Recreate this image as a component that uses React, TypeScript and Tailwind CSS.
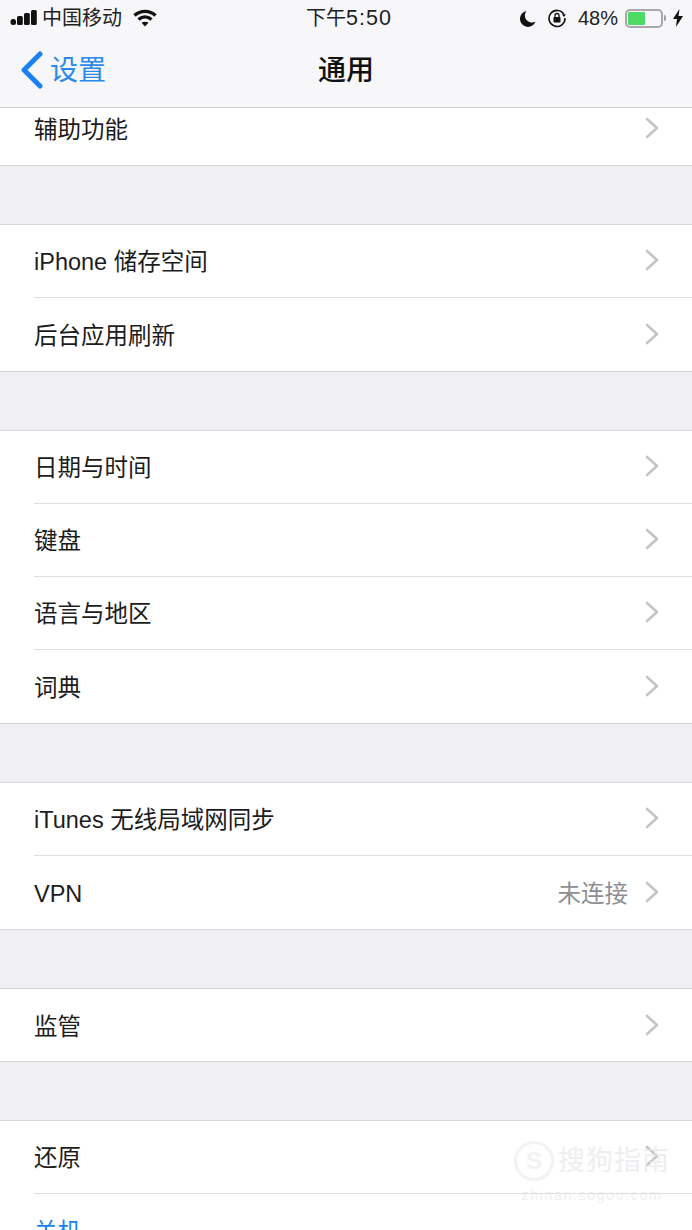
import React from 'react';

const font = { fontFamily: '"Liberation Sans", "Noto Sans CJK SC", sans-serif' };

const Chevron = () => (
  <svg width="14" height="22" viewBox="0 0 14 22" fill="none" className="shrink-0 -translate-y-[1px]">
    <path d="M2 2l10 9-10 9" stroke="#c4c4c8" strokeWidth="2.6" strokeLinecap="round" strokeLinejoin="round" />
  </svg>
);

const Row = ({ label, value, last, blue }: { label: string; value?: string; last?: boolean; blue?: boolean }) => (
  <div className="pl-[34px]">
    <div className={`flex h-[73px] items-center pr-[33px] ${last ? '' : 'border-b border-[#dddde0]'}`}>
      <span className={`flex-1 pt-[4px] text-[23.5px] leading-none ${blue ? 'text-[#1a82f0]' : 'text-[#1c1c1e]'}`}>{label}</span>
      {value && <span className="mr-[17px] pt-[4px] text-[23.5px] leading-none text-[#8e8e93]">{value}</span>}
      {!blue && <Chevron />}
    </div>
  </div>
);

const Section = ({ items, short }: { items: { label: string; value?: string }[]; short?: boolean }) => (
  <div className={`mt-[58px] border-y border-[#d9d9dd] bg-white ${short ? 'h-[74px]' : ''}`}>
    {items.map((it, i) => (
      <Row key={it.label} label={it.label} value={it.value} last={i === items.length - 1} />
    ))}
  </div>
);

const StatusBar = () => (
  <div className="flex h-[36px] items-center justify-between pl-[10px] pr-[8px] text-black">
    <div className="flex w-[200px] items-center">
      <svg width="27" height="18" viewBox="0 0 27 18" fill="#111">
        <rect x="0.500" y="10" width="5.500" height="6" rx="2.500" />
        <rect x="7" y="7" width="5.800" height="9" rx="1.500" />
        <rect x="14" y="4" width="5.800" height="12" rx="1.500" />
        <rect x="21" y="1" width="5.800" height="15" rx="1.500" />
      </svg>
      <span className="ml-[5px] text-[20px] leading-none text-[#222]">中国移动</span>
      <svg width="24" height="18" viewBox="0 0 24 18" fill="none" className="ml-[11px]">
        <path d="M1.500 6.500C7.500 1 16.500 1 22.500 6.500" stroke="#111" strokeWidth="3.400" />
        <path d="M5.500 10.500C9.500 7 14.500 7 18.500 10.500" stroke="#111" strokeWidth="3.400" />
        <path d="M8.500 13.800c2-1.500 5-1.500 7 0L12 17.500z" fill="#111" />
      </svg>
    </div>
    <div className="ml-[4px] pt-[1px] text-[20px] leading-none text-[#222]">
      下午<span className="text-[21.5px] font-medium tracking-[1px]">5:50</span>
    </div>
    <div className="flex w-[200px] items-center justify-end">
      <svg width="16" height="17" viewBox="0 0 16 17" fill="#111">
        <path d="M6.500 1a8 8 0 1 0 9 10.500A7 7 0 0 1 6.500 1z" />
      </svg>
      <svg width="20" height="20" viewBox="0 0 20 20" fill="none" className="ml-[11px]">
        <path d="M17 6.500A8 8 0 1 0 18 10" stroke="#111" strokeWidth="1.600" />
        <path d="M15 6.500h4l-2 2.500z" fill="#111" />
        <rect x="6.500" y="9" width="7" height="5.500" rx="0.800" fill="#111" />
        <path d="M8 9V7.500a2 2 0 0 1 4 0V9" stroke="#111" strokeWidth="1.300" />
      </svg>
      <span className="ml-[11px] text-[20px] leading-none text-[#222]">48%</span>
      <div className="ml-[7px] flex h-[19px] w-[38px] items-center rounded-[5px] border-2 border-[#a8a8aa] p-[1px]">
        <div className="h-full w-[17px] rounded-[1px] bg-[#4cd964]" />
      </div>
      <div className="ml-[1px] h-[6px] w-[2px] rounded-r bg-[#a0a0a2]" />
      <svg width="12" height="20" viewBox="0 0 12 20" fill="#111" className="ml-[6px]">
        <path d="M7.500 1L1 11h4l-1 8 7-11H6.500z" />
      </svg>
    </div>
  </div>
);

const NavBar = () => (
  <div className="relative flex h-[71px] items-center justify-center pb-[2px]">
    <div className="absolute left-[20px] top-[15px] flex items-center">
      <svg width="24" height="38" viewBox="0 0 24 38" fill="none">
        <path d="M20 3L4 19l16 16" stroke="#1a82f0" strokeWidth="5" strokeLinecap="round" strokeLinejoin="round" />
      </svg>
      <span className="ml-[6px] pt-[2px] text-[28px] leading-none text-[#2b8ae8]">设置</span>
    </div>
    <span className="text-[28px] font-medium leading-none text-[#111]">通用</span>
  </div>
);

const Watermark = () => (
  <div className="absolute left-[514px] top-[1141px] w-[156px] opacity-70">
    <div className="flex items-center">
      <div className="flex h-[40px] w-[40px] items-center justify-center rounded-full border-[3px] border-[#eeeeee] text-[24px] font-bold leading-none text-[#eeeeee]">
        S
      </div>
      <span className="ml-[4px] text-[27px] leading-none tracking-[1px] text-[#e8e8ea]">搜狗指南</span>
    </div>
    <div className="mt-[7px] text-center text-[14px] leading-none tracking-[1.7px] text-[#e8e8ea]">zhinan.sogou.com</div>
  </div>
);

export default function App() {
  return (
    <div className="relative h-[1230px] w-[692px] overflow-hidden bg-[#efeff4]" style={font}>
      <div className="h-[108px] border-b border-[#cfcfd2] bg-[#f7f7f9]">
        <StatusBar />
        <NavBar />
      </div>
      <div className="h-[58px] border-b border-[#d9d9dd] bg-white">
        <div className="flex h-[57px] items-center pb-[15px] pl-[34px] pr-[33px]">
          <span className="flex-1 pt-[4px] text-[23.5px] leading-none text-[#1c1c1e]">辅助功能</span>
          <Chevron />
        </div>
      </div>
      <Section items={[{ label: 'iPhone 储存空间' }, { label: '后台应用刷新' }]} />
      <Section items={[{ label: '日期与时间' }, { label: '键盘' }, { label: '语言与地区' }, { label: '词典' }]} />
      <Section items={[{ label: 'iTunes 无线局域网同步' }, { label: 'VPN', value: '未连接' }]} />
      <Section items={[{ label: '监管' }]} short />
      <div className="mt-[58px] border-t border-[#d9d9dd] bg-white">
        <Row label="还原" />
        <Row label="关机" blue last />
      </div>
      <Watermark />
    </div>
  );
}
